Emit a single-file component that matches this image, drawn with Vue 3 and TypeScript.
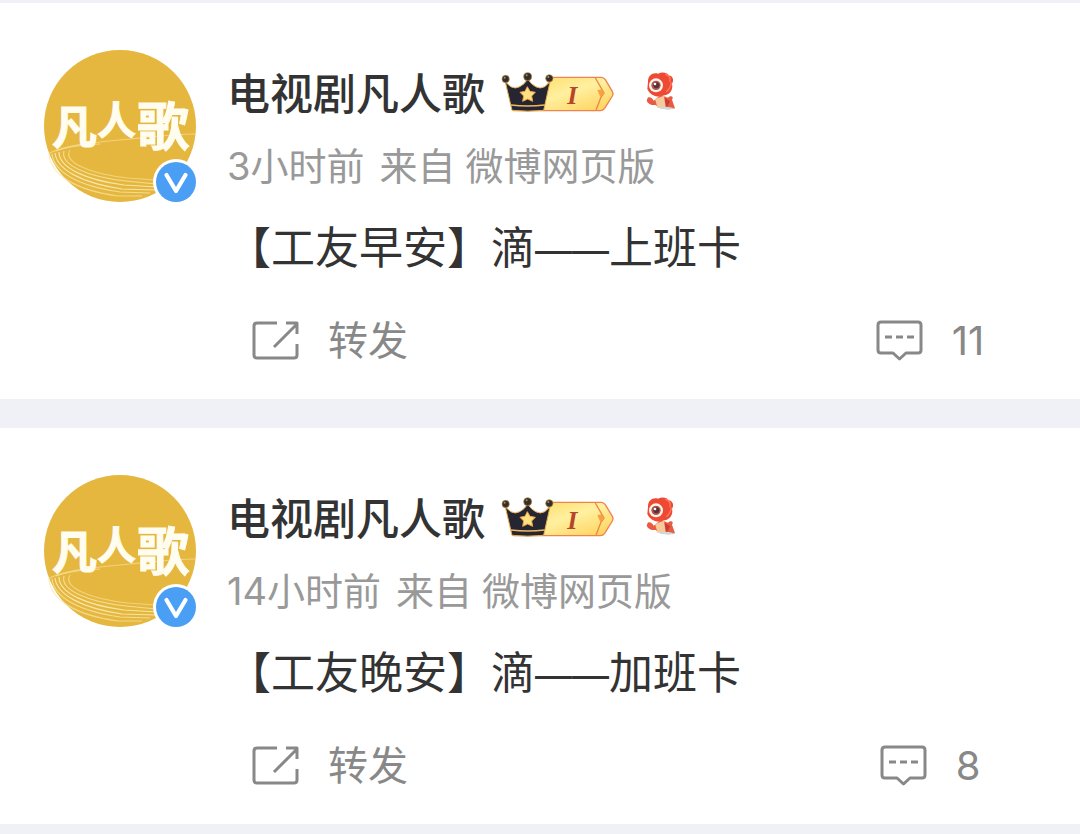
<script setup lang="ts">
interface Post {
  id: number
  author: string
  time: string
  source: string
  tag: string
  lead: string
  tail: string
  comments: number
}

const posts: Post[] = [
  { id: 1, author: '电视剧凡人歌', time: '3小时前', source: '微博网页版', tag: '【工友早安】', lead: '滴', tail: '上班卡', comments: 11 },
  { id: 2, author: '电视剧凡人歌', time: '14小时前', source: '微博网页版', tag: '【工友晚安】', lead: '滴', tail: '加班卡', comments: 8 },
]
</script>

<template>
  <main class="feed">
    <article v-for="post in posts" :key="post.id" class="post">
      <header class="head">
        <a class="avatar" href="#" :aria-label="post.author">
          <svg viewBox="0 0 156 156" width="156" height="156">
            <circle cx="76" cy="76" r="76" fill="#e6b73e" />
            <g fill="none" stroke="#f8e6a8" stroke-width="1.2">
              <path d="M4 104C22 94 55 92 86 89S128 84 151 84" stroke-opacity=".6" />
              <path d="M12 101C22 97 38 95 56 94" stroke-opacity=".7" />
              <path d="M5 105C7 124 30 140 74 146H98" stroke-opacity=".7" />
              <path d="M8 104C10 122 34 136 76 142L106 143" stroke-opacity=".8" />
              <path d="M11 103C13 120 38 133 78 139L112 140" />
              <path d="M15 102C15 118 42 130 80 135L113 137" />
              <path d="M20 101C16 115 44 127 82 131L112 134" stroke-opacity=".8" />
              <path d="M26 100C18 112 46 124 84 128L112 130" stroke-opacity=".6" />
            </g>
            <g class="logo" fill="#fffdf0" stroke="#fffdf0" stroke-width="1">
              <text x="8" y="94" font-size="45">凡</text>
              <text x="53" y="84" font-size="39">人</text>
              <text x="93" y="96" font-size="52">歌</text>
            </g>
            <circle cx="132" cy="132" r="23" fill="#fff" />
            <circle cx="132" cy="132" r="20" fill="#4a9ff5" />
            <path d="M122.500 125L132 141L141.500 125" fill="none" stroke="#fff" stroke-width="4.200" stroke-linecap="round" stroke-linejoin="round" />
          </svg>
        </a>
        <div class="info">
          <div class="name-row">
            <a class="name" href="#">{{ post.author }}</a>
            <svg class="level" viewBox="30 36 348 132" width="116" height="44" role="img" aria-label="I">
              <defs>
                <linearGradient id="gold" x1="0" y1="0" x2="1" y2="1">
                  <stop offset="0" stop-color="#ffd75a" />
                  <stop offset=".5" stop-color="#fff0a0" />
                  <stop offset="1" stop-color="#ffcf55" />
                </linearGradient>
              </defs>
              <path d="M182 52H334Q341 52 346 59L367 94Q371 101 367 108L344 145Q339 152 331 152H70L150 130Z" fill="url(#gold)" stroke="#ee8350" stroke-width="4" />
              <path d="M316 54L342 99L333 111L318 151" fill="none" stroke="#ec8648" stroke-width="4" />
              <path d="M322 91L335 88L343 100L331 110Z" fill="#f5a33e" />
              <path d="M46 66L62 80Q76 88 89 80Q104 73 113 57Q123 73 137 80Q151 88 164 80L180 66L161 151Q113 156 66 151Z" fill="#262633" stroke="#e9ad4b" stroke-width="3" stroke-linejoin="round" />
              <path d="M63 135Q113 141 164 135" fill="none" stroke="#efba61" stroke-width="4" />
              <g fill="#32302f" stroke="#bd8b3f" stroke-width="2">
                <circle cx="47" cy="57" r="11" />
                <circle cx="113" cy="50" r="12" />
                <circle cx="178" cy="55" r="11" />
              </g>
              <g fill="#a58c5c">
                <circle cx="44" cy="53" r="3" />
                <circle cx="110" cy="46" r="3" />
                <circle cx="175" cy="51" r="3" />
              </g>
              <path d="M112 80L120 94L136 97L125 108L128 124L113 117L98 124L101 108L90 97L105 94Z" fill="#ffe083" stroke="#efa640" stroke-width="3" stroke-linejoin="round" />
              <text class="rank" x="247" y="131" text-anchor="middle" fill="#b8442a">I</text>
            </svg>
            <svg class="mascot" viewBox="462 30 99 144" width="33" height="48" aria-hidden="true">
              <path d="M474 65C474 46 488 37 504 41C516 34 532 37 536 46C549 48 553 61 546 71C550 87 541 103 523 106C502 116 479 105 472 87Z" fill="#ee4933" />
              <path d="M526 42Q545 49 539 66M544 67Q542 85 529 95" fill="none" stroke="#ff7a60" stroke-width="4" />
              <path d="M472 116C475 107 487 113 491 122L512 105L534 113C545 104 552 112 546 119L555 145Q535 151 507 143L497 135Q477 137 470 122Z" fill="#e95a43" />
              <path d="M495 117L522 107L527 143L502 141Z" fill="#f7c99b" />
              <path d="M524 114L540 124L530 144Z" fill="#c83c32" />
              <path d="M497 142Q524 138 555 145Q530 153 497 142Z" fill="#c9dcda" />
              <circle cx="498" cy="76" r="21" fill="#fff5eb" />
              <circle cx="498" cy="76" r="14" fill="#b0564e" />
              <circle cx="499" cy="76" r="9" fill="#5c3038" />
              <circle cx="495" cy="72" r="4" fill="#fff" />
            </svg>
          </div>
          <p class="meta"><span>{{ post.time }}</span><span class="from">来自</span><a href="#">{{ post.source }}</a></p>
        </div>
      </header>
      <p class="text">{{ post.tag }}{{ post.lead }}<span class="dash">——</span>{{ post.tail }}</p>
      <footer class="actions">
        <button class="action repost" type="button">
          <svg viewBox="0 0 48 42" width="48" height="42" aria-hidden="true">
            <path d="M25 3H5Q2 3 2 6V35Q2 38 5 38H42Q45 38 45 35V24M22 27L45 4M34 3H45V14" />
          </svg>
          <span>转发</span>
        </button>
        <button class="action comment" type="button" aria-label="评论">
          <svg viewBox="0 0 48 42" width="48" height="42" aria-hidden="true">
            <path d="M5 2H42Q45 2 45 5V30Q45 33 42 33H30L23.500 39L17 33H5Q2 33 2 30V5Q2 2 5 2Z" />
            <path d="M9 17H16M20 17H27M31 17H38" />
          </svg>
          <span>{{ post.comments }}</span>
        </button>
      </footer>
    </article>
  </main>
</template>

<style>
body {
  background: #f0f1f6;
}
</style>

<style scoped>
.feed {
  display: flex;
  flex-direction: column;
  gap: 29px;
  padding: 3px 0 10px;
  font-family: Inter, "Noto Sans CJK SC", sans-serif;
  color: #333;
}
.post {
  padding: 47px 0 28px;
  background: #fff;
}
.head {
  display: flex;
  gap: 27px;
  padding-left: 44px;
}
.avatar {
  flex: none;
  height: 156px;
}
.avatar svg {
  display: block;
}
.logo {
  font-family: "Noto Sans CJK SC", sans-serif;
  font-weight: 700;
}
.info {
  padding-top: 14px;
}
.name-row {
  display: flex;
  align-items: center;
  height: 60px;
}
.name {
  font-size: 43px;
  font-weight: 500;
  line-height: 60px;
  color: #333;
  text-decoration: none;
}
.level {
  margin-left: 15px;
}
.rank {
  font: italic bold 78px "Liberation Serif", serif;
}
.mascot {
  margin-left: 28px;
}
.meta {
  display: flex;
  margin: 16px 0 0;
  font-size: 38px;
  line-height: 52px;
  color: #999;
}
.from {
  margin: 0 10px 0 15px;
}
.meta a {
  color: inherit;
  text-decoration: none;
}
.text {
  margin: 12px 0 0 227px;
  font-size: 44px;
  line-height: 60px;
}
.dash {
  font-size: 37px;
  line-height: 1;
}
.actions {
  display: grid;
  grid-template-columns: repeat(3, 1fr);
  margin-top: 33px;
  padding-left: 180px;
}
.action {
  display: flex;
  align-items: center;
  justify-content: center;
  gap: 28px;
  height: 60px;
  padding: 0;
  border: 0;
  background: none;
  font: inherit;
  font-size: 40px;
  line-height: 60px;
  color: #888;
  cursor: pointer;
}
.action svg {
  fill: none;
  stroke: currentColor;
  stroke-width: 3;
  stroke-linejoin: round;
}
.comment {
  grid-column: 3;
}
</style>
